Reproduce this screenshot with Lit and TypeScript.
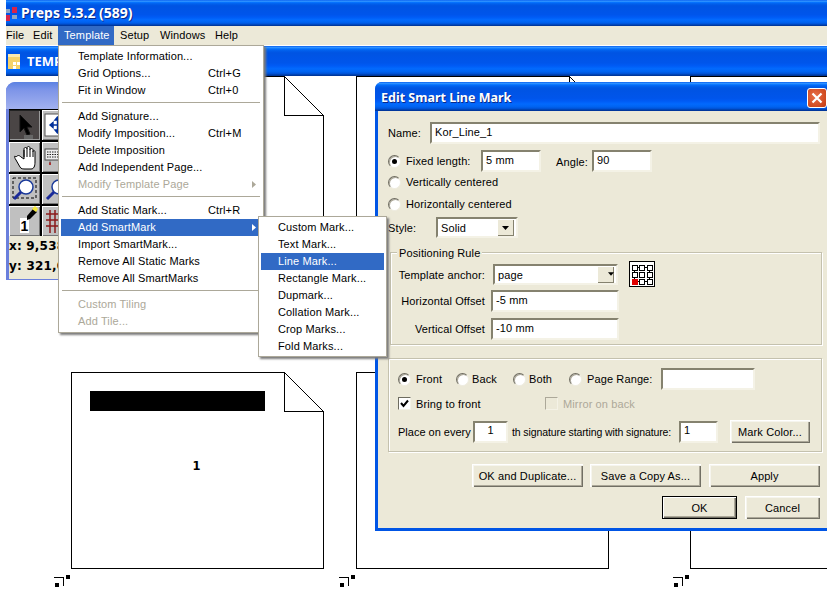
import { LitElement, html, css, svg } from "lit";
import { customElement } from "lit/decorators.js";

type Item = { t?: string; s?: string; dis?: boolean; sub?: boolean; hi?: boolean; sep?: boolean };

const MAIN: Item[] = [
  { t: "Template Information..." },
  { t: "Grid Options...", s: "Ctrl+G" },
  { t: "Fit in Window", s: "Ctrl+0" },
  { sep: true },
  { t: "Add Signature..." },
  { t: "Modify Imposition...", s: "Ctrl+M" },
  { t: "Delete Imposition" },
  { t: "Add Independent Page..." },
  { t: "Modify Template Page", dis: true, sub: true },
  { sep: true },
  { t: "Add Static Mark...", s: "Ctrl+R" },
  { t: "Add SmartMark", hi: true, sub: true },
  { t: "Import SmartMark..." },
  { t: "Remove All Static Marks" },
  { t: "Remove All SmartMarks" },
  { sep: true },
  { t: "Custom Tiling", dis: true },
  { t: "Add Tile...", dis: true },
];

const SUB: Item[] = [
  { t: "Custom Mark..." },
  { t: "Text Mark..." },
  { t: "Line Mark...", hi: true },
  { t: "Rectangle Mark..." },
  { t: "Dupmark..." },
  { t: "Collation Mark..." },
  { t: "Crop Marks..." },
  { t: "Fold Marks..." },
];

const page = (x: number, y: number) => svg`
  <path d="M${x + 0.5} ${y + 0.5}H${x + 213.5}L${x + 252.5} ${y + 39.5}V${y + 196.5}H${x + 0.5}Z" fill="#fff" stroke="#000"/>
  <path d="M${x + 213.5} ${y + 0.5}V${y + 39.5}H${x + 252.5}" fill="none" stroke="#000"/>`;

const mark = (x: number) => svg`
  <path d="M${x} 577.5H${x + 9.5}V586" fill="none" stroke="#000"/>
  <rect x="${x + 1}" y="583" width="4" height="4" fill="#000"/>
  <rect x="${x + 12}" y="575" width="4" height="4" fill="#000"/>`;

@customElement("app-root")
export class AppRoot extends LitElement {
  static styles = css`
    :host {
      display: block;
      position: relative;
      width: 827px;
      height: 603px;
      overflow: hidden;
      background: #fff;
      font-family: "Liberation Sans", Arial, sans-serif;
      font-size: 11px;
      letter-spacing: 0.12px;
      color: #000;
      --xp: linear-gradient(#0058ee 0%, #3593ff 4%, #288eff 6%, #127dff 8%, #036ffc 10%, #0262ee 14%, #0057e5 20%, #0054e3 24%, #0055eb 56%, #005bf5 66%, #026afe 76%, #0062ef 86%, #0052d6 92%, #0040ab 96%, #003092 100%);
    }
    * { box-sizing: border-box; }
    .main { display: flex; flex-direction: column; height: 603px; }
    .titlebar {
      margin-left: 6px; height: 26px; flex: none; background: var(--xp);
      display: flex; align-items: center; gap: 4px; padding-bottom: 1px;
      color: #fff; font: bold 14px "Noto Sans", sans-serif; letter-spacing: 0; text-shadow: 1px 1px 0 #0a2a88;
    }
    .menubar {
      margin-left: 6px; height: 19px; flex: none; background: #ece9d8;
      display: grid; grid-template-columns: 21px 31px 56px 40px 55px 50px; align-items: stretch;
    }
    .menubar span { padding-left: 6px; line-height: 18px; }
    .menubar span:first-child { padding-left: 0; }
    .menubar .on { background: #316ac5; color: #fff; }
    .childbar {
      margin: 1px 0 0 6px; height: 30px; flex: none; background: var(--xp);
      display: flex; align-items: center; gap: 7px; padding-left: 2px;
      color: #fff; font: bold 13px "Noto Sans", sans-serif; letter-spacing: 0;
    }
    .canvas { flex: 1; background: #fff; }
    .canvas svg { display: block; }
    .pagenum { font: bold 11.5px "DejaVu Sans", sans-serif; }

    .palette {
      position: absolute; left: 6px; top: 82px; width: 72px; height: 198px;
      background: #6a7fdc; border-top-left-radius: 9px; padding: 0 0 1px 3px;
      display: flex; flex-direction: column;
    }
    .palette-title {
      height: 27px; flex: none; margin-left: -3px; border-top-left-radius: 9px;
      background: linear-gradient(#5c82e2, #7e95e8 30%, #a2b1ef);
    }
    .tools {
      background: #000; padding: 1px 0 1px 0; display: grid; flex: none;
      grid-template-columns: 31px 31px; grid-auto-rows: 30px; gap: 2px;
    }
    .tool {
      background: #c0c0c0; display: block; width: 31px; height: 30px;
      box-shadow: inset 1px 1px 0 #fff, inset -1px -1px 0 #777;
    }
    .tool.down { background: #4a4545; box-shadow: inset 1px 1px 0 #222, inset -1px -1px 0 #999; }
    .tool text { font: bold 14px "Liberation Sans", sans-serif; }
    .status {
      flex: 1; background: #ece9d8; margin-top: -1px; white-space: nowrap;
      font: bold 12px "DejaVu Sans", sans-serif; line-height: 20px; letter-spacing: 0.2px;
    }

    .menu {
      position: absolute; background: #fff; border: 1px solid #aca899;
      box-shadow: 2px 2px 2px #7c7c7c;
      display: flex; flex-direction: column;
    }
    .menu.m1 { left: 58px; top: 45px; width: 206px; height: 288px; padding: 2px 2px; }
    .menu.m2 { left: 258px; top: 216px; width: 129px; height: 141px; padding: 2px; }
    .item {
      height: 17px; line-height: 17px; flex: none; display: grid;
      grid-template-columns: 130px 1fr; white-space: nowrap; padding-left: 17px;
    }
    .item.dis { color: #aca899; }
    .item.hi { background: #316ac5; color: #fff; }
    .item svg { justify-self: end; align-self: center; margin-right: 5px; grid-column: 2; }
    .sep { height: 9px; flex: none; padding-top: 3px; }
    .sep::before { content: ""; display: block; height: 1px; margin: 0 1px; background: #aca899; }

    .dialog {
      position: absolute; left: 375px; top: 82px; width: 452px; height: 449px;
      background: #0055e5; border-radius: 7px 0 0 0; padding: 0 0 3px 3px;
      display: flex; flex-direction: column;
    }
    .dtitle {
      height: 29px; flex: none; margin-left: -3px; border-radius: 7px 0 0 0; background: var(--xp);
      color: #fff; font: bold 12.5px "Noto Sans", sans-serif; letter-spacing: 0; text-shadow: 1px 1px 0 #0a2a88;
      display: flex; align-items: center; justify-content: space-between; padding-left: 6px;
    }
    .dtitle > span:first-child { padding-top: 2px; }
    .close {
      width: 20px; height: 20px; border: 1px solid #fff; border-radius: 3px; margin-top: 2px;
      background: radial-gradient(circle at 40% 40%, #e8704a, #d04a20 70%, #b83a18);
      display: flex; align-items: center; justify-content: center;
    }
    .dbody { flex: 1; background: #ece9d8; padding: 11px 7px 0 10px; display: flex; flex-direction: column; white-space: nowrap; }
    .row { display: flex; align-items: center; flex: none; }
    .field {
      background: #fff; height: 22px; padding: 0 0 3px 3px; display: flex; align-items: center;
      border: 2px solid; border-color: #85826f #f4f2e6 #f4f2e6 #85826f; white-space: nowrap; flex: none;
    }
    .radio {
      width: 13px; height: 13px; border-radius: 50%; background: #fff; flex: none; position: relative;
      border: 1px solid; border-color: #6e6c60 #eeece0 #eeece0 #6e6c60;
      box-shadow: inset 1px 1px 0 #aca899;
    }
    .radio.on::after {
      content: ""; position: absolute; left: 3px; top: 3px; width: 5px; height: 5px; border-radius: 50%; background: #000;
    }
    .check {
      width: 13px; height: 13px; background: #fff; flex: none; display: flex; align-items: center; justify-content: center;
      border: 1px solid; border-color: #6e6c60 #f4f2e6 #f4f2e6 #6e6c60;
    }
    .check.off { background: #ece9d8; border-color: #aca899 #f4f2e6 #f4f2e6 #aca899; }
    .muted { color: #aca899; }
    .select { padding: 0 2px 0 3px; justify-content: space-between; }
    .ddarrow {
      width: 17px; height: 17px; background: #ece9d8; display: flex; align-items: center; justify-content: center;
      box-shadow: inset 1px 1px 0 #fff, inset -1px -1px 0 #85826f;
    }
    .btn {
      height: 23px; background: #ece9d8; display: flex; align-items: center; justify-content: center; flex: none;
      box-shadow: inset 1px 1px 0 #fff, inset 2px 2px 0 #f6f5ee, inset -1px -1px 0 #716f64, inset -2px -2px 0 #aca899;
      white-space: nowrap;
    }
    .btn.def { outline: 1px solid #000; outline-offset: -1px; box-shadow: inset 2px 2px 0 #fff, inset -2px -2px 0 #716f64, inset -3px -3px 0 #aca899; }

    .r-name { height: 22px; }
    .r-name .cap { width: 42px; }
    .r-name .field { flex: 1; }
    .r-fixed { margin-top: 6px; height: 22px; }
    .r-fixed .radio, .r-v .radio, .r-h .radio { margin-right: 5px; }
    .c-fixed { width: 75px; }
    .w60 { width: 60px; }
    .c-angle { margin: 0 0 0 15px; width: 36px; padding-top: 2px; }
    .r-v { margin-top: 0; height: 20px; }
    .r-h { margin-top: 2px; height: 20px; }
    .r-style { margin-top: 3px; height: 21px; }
    .r-style .cap { width: 48px; }
    .sel-style { width: 82px; height: 21px; }

    .group { position: relative; border: 1px solid #c4c1ae; box-shadow: 1px 1px 0 #fff, inset 1px 1px 0 #fff; flex: none; }
    .legend { position: absolute; left: 6px; top: -6px; background: #ece9d8; padding: 0 2px; line-height: 13px; }
    .g1 { margin: 14px -2px 0 2px; height: 93px; padding: 11px 0 0 0; }
    .g1 .cap { width: 94px; text-align: right; }
    .g1 .ctl { margin-left: 6px; width: 128px; }
    .g1 .sel { margin-left: 8px; width: 125px; height: 21px; }
    .g1 svg { margin: -2px 0 0 11px; }
    .r-anchor { height: 21px; }
    .r-hoff { margin-top: 5px; height: 22px; }
    .r-voff { margin-top: 6px; height: 22px; }

    .g2 { margin: 13px -2px 0 0; height: 94px; padding: 9px 0 0 9px; }
    .radios { display: grid; grid-template-columns: 18px 40px 16px 41px 16px 40px 18px 74px 94px; align-items: center; height: 22px; }
    .w94 { width: 94px; }
    .checks { display: grid; grid-template-columns: 18px 129px 18px 1fr; align-items: center; height: 13px; margin-top: 7px; }
    .place { margin-top: 10px; height: 23px; }
    .c-every { width: 75px; letter-spacing: 0; }
    .f-every { width: 35px; justify-content: center; padding-left: 0; }
    .c-th { width: 171px; padding-left: 4px; font-size: 10.5px; letter-spacing: -0.1px; }
    .f-start { width: 39px; }
    .btn.color { width: 80px; margin-left: 12px; }

    .b-row { justify-content: flex-end; flex: none; }
    .b1 { margin-top: 12px; gap: 7px; }
    .b1 .btn { width: 111px; }
    .b1 .btn:last-child { margin-left: 1px; }
    .b2 { margin-top: 9px; gap: 8px; }
    .b2 .btn { width: 75px; }
  `;

  private item(i: Item) {
    if (i.sep) return html`<div class="sep"></div>`;
    const cls = `item ${i.dis ? "dis" : ""} ${i.hi ? "hi" : ""}`;
    return html`<div class=${cls}>
      <span>${i.t}</span>
      ${i.s ? html`<span>${i.s}</span>` : ""}
      ${i.sub
        ? html`<svg width="4" height="7" viewBox="0 0 4 7"><path d="M0 0L4 3.5L0 7Z" fill="currentColor"/></svg>`
        : ""}
    </div>`;
  }

  private tools() {
    const glass = (x: number, y: number) => svg`
      <circle cx="${x}" cy="${y}" r="7" fill="#fff" stroke="#1a3a9a" stroke-width="1.5"/>
      <path d="M${x - 5} ${y + 5}L${x - 12} ${y + 12}" stroke="#1a2a9a" stroke-width="3"/>`;
    return html`
      <svg class="tool down" viewBox="0 0 31 30">
        <path d="M11 5V22L15 18L18 25L21 24L18 17H23Z" fill="#000" stroke="#111"/>
        <rect x="15" y="25" width="9" height="4" fill="#666"/>
      </svg>
      <svg class="tool" viewBox="0 0 31 30">
        <rect x="3" y="4" width="25" height="22" fill="#fff" stroke="#555"/>
        <path d="M15.5 7V23M8 15H23M15.5 7L13 10H18ZM15.5 23L13 20H18ZM8 15L11 12.5V17.5ZM23 15L20 12.5V17.5Z" stroke="#00309a" stroke-width="1.4" fill="#00309a"/>
      </svg>
      <svg class="tool" viewBox="0 0 31 30">
        <path d="M7 15C5 13 5 15 7 18L11 25C12 27 14 27 17 27H22C25 27 26 24 26 20V10C26 8 24 8 24 10V8C24 6 21 6 21 8V6C21 4 18 4 18 6V7C18 5 15 5 15 7V17L12 15C10 13 9 13 7 15Z" fill="#fff" stroke="#000"/>
        <path d="M15 8V15M18 7V15M21 8V15M24 10V15" stroke="#000"/>
      </svg>
      <svg class="tool" viewBox="0 0 31 30">
        <rect x="3" y="7" width="19" height="11" fill="#eee" stroke="#444"/>
        <path d="M5 10H20M5 12.5H20M5 15H20" stroke="#222" stroke-dasharray="1.5 1"/>
        <rect x="7" y="20" width="2" height="3" fill="#a33"/>
        <path d="M8 18V21" stroke="#777"/>
      </svg>
      <svg class="tool" viewBox="0 0 31 30">
        <rect x="4" y="4" width="23" height="20" fill="none" stroke="#000" stroke-dasharray="3 2"/>
        ${glass(17, 13)}
      </svg>
      <svg class="tool" viewBox="0 0 31 30">${glass(17, 13)}</svg>
      <svg class="tool" viewBox="0 0 31 30">
        <rect x="11" y="12" width="9" height="15" fill="#fff"/>
        <text x="15.5" y="25" text-anchor="middle">1</text>
        <path d="M18 10L24 3L28 6L21 13L18 14Z" fill="#000"/>
        <path d="M23 3L26 0L29 3L27 6Z" fill="#f4e83a"/>
      </svg>
      <svg class="tool" viewBox="0 0 31 30">
        <path d="M8 4V27M13 4V27M18 4V27M23 4V27M4 8H27M4 14H27M4 20H27" stroke="#8b1a1a" stroke-width="1.5"/>
      </svg>
    `;
  }

  private gridIcon() {
    const cells = [];
    for (const y of [4, 11, 18])
      for (const x of [3, 10, 18]) {
        const red = x === 3 && y === 18;
        cells.push(svg`<rect x="${x + 0.5}" y="${y + 0.5}" width="5" height="5" fill=${red ? "#e00000" : "#fff"} stroke=${red ? "#e00000" : "#000"}/>`);
      }
    return html`<svg width="26" height="26" viewBox="0 0 26 26" shape-rendering="crispEdges">
      <rect x=".5" y=".5" width="25" height="25" fill="#fff" stroke="#000"/>
      <path d="M3 6.5H24M3 20.5H24M5.5 9V18M20.5 9V18" stroke="#000"/>
      ${cells}
    </svg>`;
  }

  private dd() {
    return html`<span class="ddarrow"><svg width="7" height="4" viewBox="0 0 7 4"><path d="M0 0H7L3.5 4Z" fill="#000"/></svg></span>`;
  }

  render() {
    return html`
      <div class="main">
        <div class="titlebar">
          <svg width="11" height="16" viewBox="0 0 11 16" shape-rendering="crispEdges">
            <rect x="6" y="2" width="5" height="6" fill="#d8244a"/>
            <rect x="0" y="4" width="4" height="4" fill="#8ea6c4"/>
            <rect x="6" y="10" width="5" height="4" fill="#8ea6c4"/>
            <rect x="0" y="10" width="4" height="6" fill="#d8244a"/>
          </svg>
          <span>Preps 5.3.2 (589)</span>
        </div>
        <div class="menubar">
          <span>File</span><span>Edit</span><span class="on">Template</span><span>Setup</span><span>Windows</span><span>Help</span>
        </div>
        <div class="childbar">
          <svg width="12" height="16" viewBox="0 0 12 16" shape-rendering="crispEdges">
            <rect x="0" y="1" width="12" height="15" fill="#f6d36a"/>
            <rect x="0" y="1" width="12" height="3" fill="#fbeab0"/>
            <rect x="5" y="9" width="3" height="3" fill="#fff"/>
            <rect x="5" y="13" width="3" height="3" fill="#fff"/>
            <rect x="9" y="9" width="3" height="3" fill="#fff"/>
          </svg>
          <span>TEMP</span>
        </div>
        <div class="canvas">
          <svg width="827" height="527" viewBox="0 76 827 527" shape-rendering="crispEdges">
            ${page(71, 76)} ${page(356, 76)} ${page(690, 76)}
            ${page(71, 372)} ${page(356, 372)} ${page(690, 372)}
            <rect x="90" y="391" width="175" height="20" fill="#000"/>
            <text class="pagenum" x="196.5" y="470" text-anchor="middle">1</text>
            ${mark(54)} ${mark(339)} ${mark(673)}
          </svg>
        </div>
      </div>

      <div class="palette">
        <div class="palette-title"></div>
        <div class="tools">${this.tools()}</div>
        <div class="status"><div>x: 9,538</div><div>y: 321,0</div></div>
      </div>

      <div class="dialog">
        <div class="dtitle">
          <span>Edit Smart Line Mark</span>
          <span class="close">
            <svg width="12" height="12" viewBox="0 0 12 12"><path d="M1.5 1.5L10.5 10.5M10.5 1.5L1.5 10.5" stroke="#fff" stroke-width="2.2"/></svg>
          </span>
        </div>
        <div class="dbody">
          <div class="row r-name"><span class="cap">Name:</span><div class="field">Kor_Line_1</div></div>
          <div class="row r-fixed">
            <span class="radio on"></span><span class="c-fixed">Fixed length:</span>
            <div class="field w60">5 mm</div>
            <span class="c-angle">Angle:</span>
            <div class="field w60">90</div>
          </div>
          <div class="row r-v"><span class="radio"></span><span>Vertically centered</span></div>
          <div class="row r-h"><span class="radio"></span><span>Horizontally centered</span></div>
          <div class="row r-style">
            <span class="cap">Style:</span>
            <div class="field select sel-style"><span>Solid</span>${this.dd()}</div>
          </div>

          <div class="group g1">
            <span class="legend">Positioning Rule</span>
            <div class="row r-anchor">
              <span class="cap">Template anchor:</span>
              <div class="field select sel"><span>page</span>${this.dd()}</div>
              ${this.gridIcon()}
            </div>
            <div class="row r-hoff"><span class="cap">Horizontal Offset</span><div class="field ctl">-5 mm</div></div>
            <div class="row r-voff"><span class="cap">Vertical Offset</span><div class="field ctl">-10 mm</div></div>
          </div>

          <div class="group g2">
            <div class="radios">
              <span class="radio on"></span><span>Front</span>
              <span class="radio"></span><span>Back</span>
              <span class="radio"></span><span>Both</span>
              <span class="radio"></span><span>Page Range:</span>
              <div class="field w94"></div>
            </div>
            <div class="checks">
              <span class="check"><svg width="9" height="9" viewBox="0 0 9 9"><path d="M1 4L3.5 7L8 1.5" fill="none" stroke="#000" stroke-width="2"/></svg></span>
              <span>Bring to front</span>
              <span class="check off"></span>
              <span class="muted">Mirror on back</span>
            </div>
            <div class="row place">
              <span class="c-every">Place on every</span>
              <div class="field f-every">1</div>
              <span class="c-th">th signature starting with signature:</span>
              <div class="field f-start">1</div>
              <div class="btn color">Mark Color...</div>
            </div>
          </div>

          <div class="row b-row b1">
            <div class="btn">OK and Duplicate...</div>
            <div class="btn">Save a Copy As...</div>
            <div class="btn">Apply</div>
          </div>
          <div class="row b-row b2">
            <div class="btn def">OK</div>
            <div class="btn">Cancel</div>
          </div>
        </div>
      </div>

      <div class="menu m1">${MAIN.map((i) => this.item(i))}</div>
      <div class="menu m2">${SUB.map((i) => this.item(i))}</div>
    `;
  }
}
